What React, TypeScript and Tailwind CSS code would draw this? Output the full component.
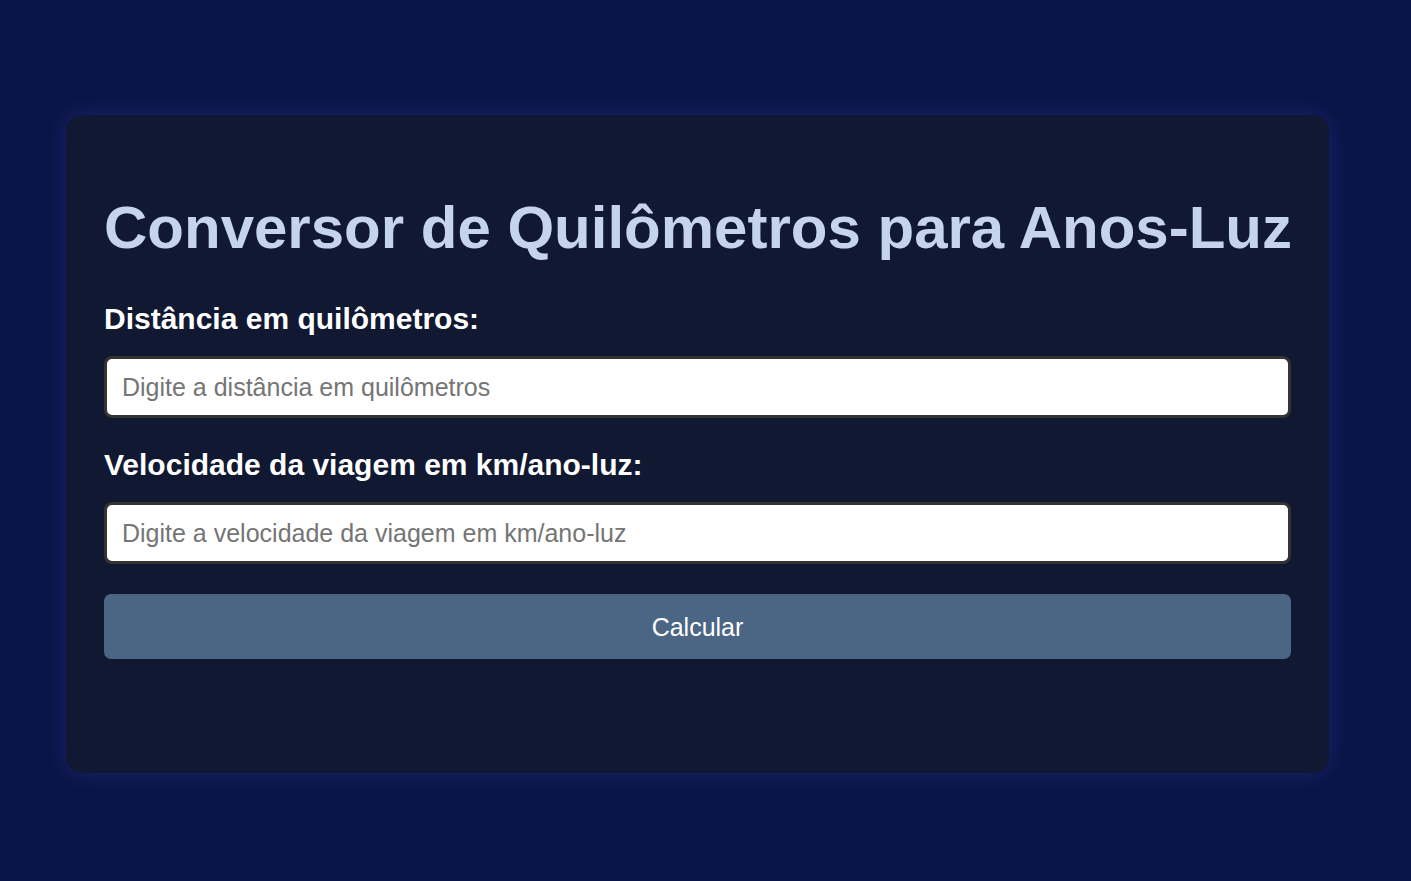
import { useState } from "react";

const App = () => {
  const [km, setKm] = useState("");
  const [speed, setSpeed] = useState("");

  return (
    <div
      className="min-h-screen bg-[#0b1446] pt-[115px] pl-[66px]"
      style={{ fontFamily: '"Liberation Sans", Arial, sans-serif' }}
    >
      <div className="w-[1263px] h-[658px] rounded-[16px] bg-[#101832] px-[38px] pt-[38px] shadow-[0_0_22px_rgba(60,80,200,0.3)]">
        <h1 className="mt-[40px] mb-[38px] text-[60px] leading-[69px] font-bold text-[#c5d4ec] whitespace-nowrap">
          Conversor de Quilômetros para Anos-Luz
        </h1>

        <label className="block text-[30px] leading-[38px] font-bold text-white">
          Distância em quilômetros:
        </label>
        <input
          type="number"
          value={km}
          onChange={(e) => setKm(e.target.value)}
          placeholder="Digite a distância em quilômetros"
          className="mt-[18px] block w-full h-[62px] rounded-[8px] border-[3px] border-[#333333] bg-white px-[15px] text-[25px] text-black placeholder:text-[#757575] outline-none"
        />

        <label className="mt-[30px] block text-[30px] leading-[34px] font-bold text-white">
          Velocidade da viagem em km/ano-luz:
        </label>
        <input
          type="number"
          value={speed}
          onChange={(e) => setSpeed(e.target.value)}
          placeholder="Digite a velocidade da viagem em km/ano-luz"
          className="mt-[20px] block w-full h-[62px] rounded-[8px] border-[3px] border-[#333333] bg-white px-[15px] text-[25px] text-black placeholder:text-[#757575] outline-none"
        />

        <button className="mt-[30px] block w-full h-[65px] rounded-[7px] bg-[#4b6584] pt-[2px] text-[25px] text-white">
          Calcular
        </button>
      </div>
    </div>
  );
};

export default App;
